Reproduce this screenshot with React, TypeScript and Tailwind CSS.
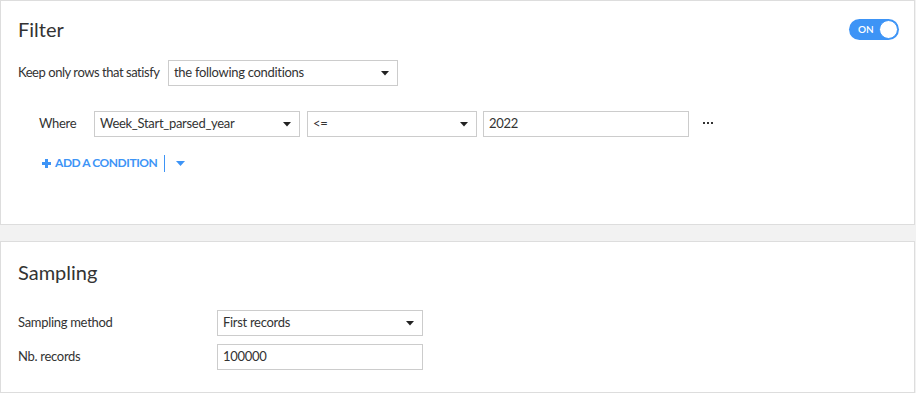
import React from "react";

function Caret() {
  return (
    <svg width="8" height="5" viewBox="0 0 8 5" className="shrink-0">
      <path d="M0 0 L8 0 L4 4.5 Z" fill="#222" />
    </svg>
  );
}

function Select({ value, className }: { value: string; className: string }) {
  return (
    <div
      className={
        "flex items-center justify-between border border-[#cccccc] bg-white pl-[5px] pr-[8px] text-[13px] text-[#333] " +
        className
      }
    >
      <span>{value}</span>
      <Caret />
    </div>
  );
}

function Input({ value, className }: { value: string; className: string }) {
  return (
    <div
      className={
        "flex items-center border border-[#cccccc] bg-white pl-[5px] text-[13px] text-[#333] " +
        className
      }
    >
      {value}
    </div>
  );
}

export default function App() {
  return (
    <div
      className="w-[916px] h-[393px] bg-[#f2f2f2] flex flex-col overflow-hidden tracking-[-0.3px]"
      style={{ fontFamily: "Lato, 'Liberation Sans', sans-serif" }}
    >
      <section className="h-[225px] bg-white border border-[#dddddd] mr-[1px] flex flex-col px-[17px]">
        <div className="flex items-center justify-between h-[59px]">
          <h2 className="text-[20px] text-[#333] leading-none mt-[-4px] tracking-normal">Filter</h2>
          <div className="mr-[-2px] mt-[-3px] w-[50px] h-[21px] rounded-full bg-[#3d94f6] flex items-center justify-between pl-[9px] pr-[1px]">
            <span className="text-[10px] font-semibold text-white tracking-normal">ON</span>
            <span className="w-[19px] h-[19px] rounded-full bg-white border border-[#3d94f6]" />
          </div>
        </div>
        <div className="flex items-center text-[13px] text-[#333]">
          <span className="w-[150px] whitespace-nowrap tracking-[-0.45px]">Keep only rows that satisfy</span>
          <Select value="the following conditions" className="w-[230px] h-[26px]" />
        </div>
        <div className="flex items-center mt-[25px] ml-[21px] text-[13px] text-[#333]">
          <span className="w-[55px]">Where</span>
          <Select value="Week_Start_parsed_year" className="w-[206px] h-[26px]" />
          <Select value="<=" className="w-[170px] h-[26px] ml-[7px]" />
          <Input value="2022" className="w-[206px] h-[26px] ml-[6px]" />
          <svg width="10" height="3" viewBox="0 0 10 3" className="ml-[14px] mt-[-2px]">
            <rect x="0" y="0" width="2" height="2" fill="#333" />
            <rect x="4" y="0" width="2" height="2" fill="#333" />
            <rect x="8" y="0" width="2" height="2" fill="#333" />
          </svg>
        </div>
        <div className="flex items-center mt-[17px] ml-[24px] text-[#3d94f6]">
          <svg width="9" height="9" viewBox="0 0 9 9" className="mr-[4px]">
            <rect x="3" y="0" width="3" height="9" fill="#3d94f6" />
            <rect x="0" y="3" width="9" height="3" fill="#3d94f6" />
          </svg>
          <span className="text-[12px] font-bold tracking-[-0.45px] whitespace-nowrap">
            ADD A CONDITION
          </span>
          <span className="ml-[7px] w-[1px] h-[17px] bg-[#3d94f6]" />
          <svg width="9" height="5" viewBox="0 0 9 5" className="ml-[11px]">
            <path d="M0 0 L9 0 L4.5 5 Z" fill="#3d94f6" />
          </svg>
        </div>
      </section>
      <div className="h-[16px]" />
      <section className="flex-1 bg-white border border-[#dddddd] mr-[1px] px-[17px] flex flex-col">
        <h2 className="text-[20px] text-[#333] leading-none mt-[20px] tracking-normal">Sampling</h2>
        <div className="flex items-center mt-[28px] text-[13px] text-[#333]">
          <span className="w-[199px]">Sampling method</span>
          <Select value="First records" className="w-[206px] h-[26px]" />
        </div>
        <div className="flex items-center mt-[8px] text-[13px] text-[#333]">
          <span className="w-[199px]">Nb. records</span>
          <Input value="100000" className="w-[206px] h-[26px]" />
        </div>
      </section>
    </div>
  );
}
